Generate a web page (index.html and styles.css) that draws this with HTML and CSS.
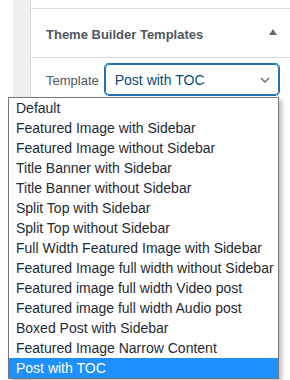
FILE: index.html
```html
<!DOCTYPE html>
<html lang="en">
<head>
    <meta charset="UTF-8">
    <meta name="viewport" content="width=device-width, initial-scale=1.0">
    <title>Theme Builder Templates</title>
    <link rel="stylesheet" href="styles.css">
</head>
<body>
    <div class="page">
        <div class="gutter"></div>
        <div class="sidebar">
            <div class="prev-box"></div>
            <div class="postbox">
                <div class="postbox-header">
                    <h2>Theme Builder Templates</h2>
                    <span class="toggle-arrow"></span>
                </div>
                <div class="inside">
                    <label class="field-label">Template</label>
                    <div class="select-box">
                        <span class="select-value">Post with TOC</span>
                        <svg class="chevron" width="10" height="6" viewBox="0 0 10 6">
                            <path d="M1 1 L5 5 L9 1" fill="none" stroke="#646970" stroke-width="1.4"/>
                        </svg>
                    </div>
                </div>
            </div>
        </div>
    </div>

    <ul class="dropdown">
        <li>Default</li>
        <li>Featured Image with Sidebar</li>
        <li>Featured Image without Sidebar</li>
        <li>Title Banner with Sidebar</li>
        <li>Title Banner without Sidebar</li>
        <li>Split Top with Sidebar</li>
        <li>Split Top without Sidebar</li>
        <li>Full Width Featured Image with Sidebar</li>
        <li>Featured Image full width without Sidebar</li>
        <li>Featured image full width Video post</li>
        <li>Featured image full width Audio post</li>
        <li>Boxed Post with Sidebar</li>
        <li>Featured Image Narrow Content</li>
        <li class="selected">Post with TOC</li>
    </ul>
</body>
</html>
```

FILE: styles.css
```css
body {
    margin: 0;
    background-color: #fff;
    font-family: "Liberation Sans", Arial, sans-serif;
    color: #1d2327;
    height: 380px;
    overflow: hidden;
}

.page {
    display: flex;
    height: 380px;
}

.gutter {
    width: 13px;
    background-color: #fff;
}

.sidebar {
    flex: 1;
    display: flex;
    flex-direction: column;
    background-color: #f0f0f1;
    padding-left: 17px;
}

.prev-box {
    height: 8px;
    background-color: #fff;
    border-left: 1px solid #dcdcde;
}

.postbox {
    flex: 1;
    background-color: #fff;
    border-left: 1px solid #dcdcde;
    border-top: 1px solid #dcdcde;
}

.postbox-header {
    display: flex;
    align-items: center;
    justify-content: space-between;
    height: 48px;
    padding: 0 13px 0 15px;
    border-bottom: 1px solid #dcdcde;
}

.postbox-header h2 {
    margin: 0;
    font-size: 13px;
    font-weight: bold;
    color: #50575e;
    padding-top: 2px;
}

.toggle-arrow {
    width: 0;
    height: 0;
    border-left: 4px solid transparent;
    border-right: 4px solid transparent;
    border-bottom: 6px solid #646970;
    margin-top: -2px;
}

.inside {
    display: flex;
    align-items: center;
    padding: 6px 11px 0 15px;
}

.field-label {
    font-size: 13px;
    color: #50575e;
    margin-right: 6px;
    padding-top: 2px;
}

.select-box {
    flex: 1;
    height: 29px;
    display: flex;
    align-items: center;
    justify-content: space-between;
    padding: 0 8px 0 9px;
    border: 1px solid #2271b1;
    border-radius: 4px;
    box-shadow: 0 0 0 1px #2271b1;
}

.select-value {
    font-size: 14px;
    color: #0a4b78;
}

.chevron {
    margin-top: 1px;
}

.dropdown {
    position: absolute;
    top: 97px;
    left: 8px;
    width: 269px;
    margin: 0;
    padding: 0;
    list-style: none;
    background-color: #fff;
    border: 1px solid #767676;
    box-shadow: 3px 3px 4px rgba(0, 0, 0, 0.25);
}

.dropdown li {
    height: 20px;
    line-height: 20px;
    padding-left: 7px;
    font-size: 14px;
    color: #1e2a33;
    white-space: nowrap;
}

.dropdown li.selected {
    background-color: #1e90ff;
    color: #fff;
}
```
